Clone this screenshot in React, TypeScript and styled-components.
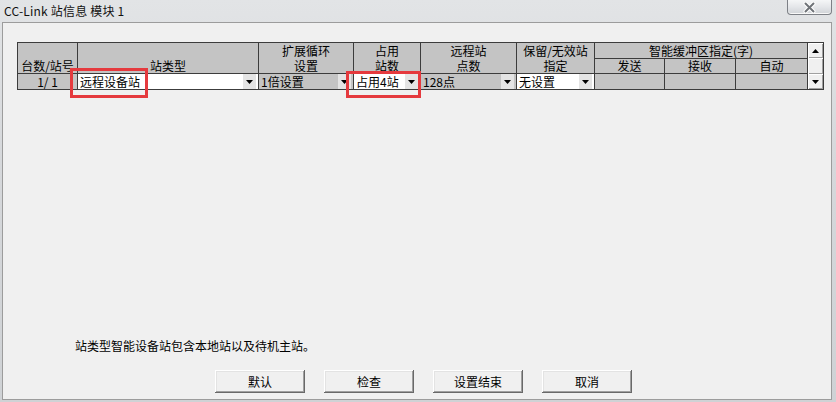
import styled, { createGlobalStyle } from "styled-components";

const GlobalStyle = createGlobalStyle`
  html, body {
    margin: 0;
    padding: 0;
    background: #d9dbde;
  }
  body {
    font-family: "Noto Sans CJK SC", "Liberation Sans", sans-serif;
    font-size: 12px;
    color: #000;
  }
`;

const Window = styled.div`
  width: 836px;
  height: 402px;
  display: flex;
  flex-direction: column;
  background: linear-gradient(180deg, #e2e4e6 0%, #d6d8db 40%, #cfd2d5 100%);
  overflow: hidden;
`;

const TitleBar = styled.div`
  height: 22px;
  display: flex;
  align-items: flex-start;
  flex-shrink: 0;
`;

const Title = styled.span`
  padding: 3px 0 0 4px;
  font-size: 12px;
  line-height: 15px;
  color: #111;
  letter-spacing: 0.2px;
`;

const CloseButton = styled.div`
  margin-left: auto;
  margin-right: 4px;
  width: 43px;
  height: 14px;
  border: 1px solid #7d8086;
  border-top: none;
  border-radius: 0 0 4px 4px;
  background: linear-gradient(180deg, #f5f6f7 0%, #e4e6e9 50%, #d0d3d7 100%);
  box-shadow: inset 0 -1px #f8f8f8;
  display: flex;
  align-items: center;
  justify-content: center;
`;

const Client = styled.div`
  flex: 1;
  margin: 0 4px 2px 2px;
  border: 1px solid #9c9c9c;
  background: #f0f0f0;
  display: flex;
  flex-direction: column;
  padding: 19px 0 6px 14px;
`;

const TableArea = styled.div`
  position: relative;
  display: flex;
  align-items: flex-start;
`;

const Grid = styled.div`
  display: grid;
  grid-template-columns: 59px 180px 94px 66px 95px 77px 69px 70px 71px;
  grid-template-rows: 15px 14px 15px;
  gap: 1px;
  padding: 1px;
  background: #3c3c3c;
`;

const HeadCell = styled.div<{ col: string; row: string }>`
  grid-column: ${(p) => p.col};
  grid-row: ${(p) => p.row};
  background: #c4c4c4;
  display: flex;
  flex-direction: column;
  justify-content: flex-end;
  align-items: center;
  line-height: 15px;
  font-size: 12px;
  white-space: nowrap;
`;

const SubHeadCell = styled(HeadCell)`
  justify-content: center;
  line-height: 14px;
`;

const DataCell = styled.div<{ light?: boolean }>`
  background: ${(p) => (p.light ? "#ffffff" : "#c4c4c4")};
  display: flex;
  align-items: center;
  line-height: 15px;
  font-size: 12px;
  white-space: nowrap;
  overflow: hidden;
`;

const NumberCell = styled(DataCell)`
  justify-content: center;
`;

const ComboText = styled.span`
  flex: 1;
  padding-left: 2px;
`;

const DropButton = styled.div`
  width: 13px;
  height: 15px;
  margin-right: 2px;
  background: #e4e4e4;
  display: flex;
  align-items: center;
  justify-content: center;
`;

const ScrollBar = styled.div`
  width: 15px;
  height: 46px;
  border: 1px solid #3c3c3c;
  border-left: none;
  background: #e8e8e8;
  display: flex;
  flex-direction: column;
`;

const ScrollPart = styled.div<{ grow?: boolean }>`
  height: 15px;
  flex: ${(p) => (p.grow ? 1 : "none")};
  background: #f0f0f0;
  box-shadow: inset 1px 1px #ffffff, inset -1px -1px #a0a0a0;
  display: flex;
  align-items: center;
  justify-content: center;
`;

const Mark = styled.div<{ x: number; y: number; w: number; h: number }>`
  position: absolute;
  left: ${(p) => p.x}px;
  top: ${(p) => p.y}px;
  width: ${(p) => p.w}px;
  height: ${(p) => p.h}px;
  border: 3px solid #e53a3e;
  box-sizing: border-box;
  pointer-events: none;
`;

const Spacer = styled.div`
  flex: 1;
`;

const Note = styled.div`
  padding-left: 58px;
  line-height: 16px;
  font-size: 12px;
  margin-bottom: 16px;
`;

const ButtonRow = styled.div`
  display: flex;
  gap: 19px;
  padding-left: 198px;
`;

const Button = styled.button`
  width: 90px;
  height: 23px;
  padding: 0;
  border: none;
  background: #f0f0f0;
  font-family: "Noto Sans CJK SC", "Liberation Sans", sans-serif;
  font-size: 12px;
  color: #000;
  box-shadow: inset -1px -1px #696969, inset 1px 1px #ffffff,
    inset -2px -2px #a0a0a0, inset 2px 2px #e3e3e3;
`;

function Arrow({ up }: { up?: boolean }) {
  return (
    <svg width="7" height="4" viewBox="0 0 7 4">
      <polygon points={up ? "3.5,0 7,4 0,4" : "0,0 7,0 3.5,4"} fill="#000" />
    </svg>
  );
}

function Combo({ text, light }: { text: string; light?: boolean }) {
  return (
    <DataCell light={light}>
      <ComboText>{text}</ComboText>
      <DropButton>
        <Arrow />
      </DropButton>
    </DataCell>
  );
}

function App() {
  return (
    <>
      <GlobalStyle />
      <Window>
        <TitleBar>
          <Title>CC-Link 站信息 模块 1</Title>
          <CloseButton>
            <svg width="13" height="11" viewBox="0 0 13 11">
              <path
                d="M2.5 1.5 L10.5 9.5 M10.5 1.5 L2.5 9.5"
                stroke="#ffffff"
                strokeWidth="4"
                strokeLinecap="round"
              />
              <path
                d="M2.5 1.5 L10.5 9.5 M10.5 1.5 L2.5 9.5"
                stroke="#6f7378"
                strokeWidth="2"
                strokeLinecap="round"
              />
            </svg>
          </CloseButton>
        </TitleBar>
        <Client>
          <TableArea>
            <Grid>
              <HeadCell col="1" row="1 / 3">台数/站号</HeadCell>
              <HeadCell col="2" row="1 / 3">站类型</HeadCell>
              <HeadCell col="3" row="1 / 3">
                <span>扩展循环</span>
                <span>设置</span>
              </HeadCell>
              <HeadCell col="4" row="1 / 3">
                <span>占用</span>
                <span>站数</span>
              </HeadCell>
              <HeadCell col="5" row="1 / 3">
                <span>远程站</span>
                <span>点数</span>
              </HeadCell>
              <HeadCell col="6" row="1 / 3">
                <span>保留/无效站</span>
                <span>指定</span>
              </HeadCell>
              <SubHeadCell col="7 / 10" row="1">智能缓冲区指定(字)</SubHeadCell>
              <SubHeadCell col="7" row="2">发送</SubHeadCell>
              <SubHeadCell col="8" row="2">接收</SubHeadCell>
              <SubHeadCell col="9" row="2">自动</SubHeadCell>

              <NumberCell>1/ 1</NumberCell>
              <Combo text="远程设备站" light />
              <Combo text="1倍设置" />
              <Combo text="占用4站" light />
              <Combo text="128点" />
              <Combo text="无设置" light />
              <DataCell />
              <DataCell />
              <DataCell />
            </Grid>
            <ScrollBar>
              <ScrollPart>
                <Arrow up />
              </ScrollPart>
              <ScrollPart grow />
              <ScrollPart>
                <Arrow />
              </ScrollPart>
            </ScrollBar>
            <Mark x={53} y={26} w={78} h={30} />
            <Mark x={329} y={29} w={75} h={27} />
          </TableArea>
          <Spacer />
          <Note>站类型智能设备站包含本地站以及待机主站。</Note>
          <ButtonRow>
            <Button>默认</Button>
            <Button>检查</Button>
            <Button>设置结束</Button>
            <Button>取消</Button>
          </ButtonRow>
        </Client>
      </Window>
    </>
  );
}

export default App;
